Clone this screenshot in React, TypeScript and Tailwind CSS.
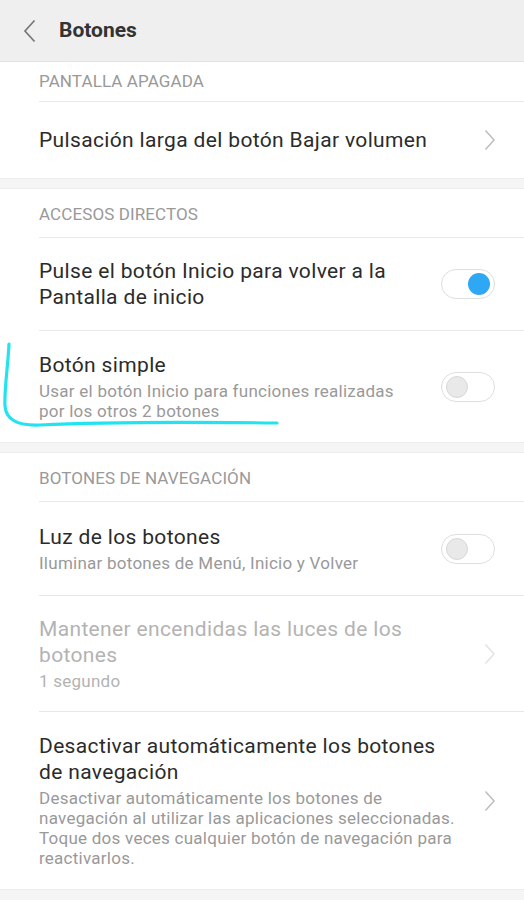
function Toggle({ on }: { on?: boolean }) {
  return (
    <div className="w-[54px] h-[30px] rounded-full border border-[#dedede] bg-white flex items-center px-[4px] shrink-0">
      {on ? (
        <div className="ml-auto w-[22px] h-[22px] rounded-full bg-[#2ea8f4]" />
      ) : (
        <div className="w-[22px] h-[22px] rounded-full bg-[#e9e9e9] border border-[#d8d8d8]" />
      )}
    </div>
  );
}

function SectionHeader({ label }: { label: string }) {
  return (
    <div className="h-[49px] pt-[4px] flex items-center text-[17px] tracking-[0.1px] text-[#999999] border-b border-[#e8e8e8]">
      {label}
    </div>
  );
}

interface RowProps {
  title: string[];
  sub?: string[];
  right?: React.ReactNode;
  disabled?: boolean;
  last?: boolean;
  py?: string;
}

function Row({ title, sub, right, disabled, last, py = "py-[20px]" }: RowProps) {
  return (
    <div className={`flex items-center ${py} pr-[29px] ${last ? "" : "border-b border-[#e8e8e8]"}`}>
      <div className="flex-1 min-w-0">
        {title.map((t) => (
          <div
            key={t}
            className={`text-[21px] tracking-[0.35px] leading-[26px] whitespace-nowrap ${disabled ? "text-[#b3b3b3]" : "text-[#2b2b2b]"}`}
          >
            {t}
          </div>
        ))}
        {sub && (
          <div className="mt-[3px]">
            {sub.map((s) => (
              <div
                key={s}
                className={`text-[17px] tracking-[0.25px] leading-[20px] whitespace-nowrap ${disabled ? "text-[#b3b3b3]" : "text-[#999999]"}`}
              >
                {s}
              </div>
            ))}
          </div>
        )}
      </div>
      {right}
    </div>
  );
}

function Chevron({ faded }: { faded?: boolean }) {
  return (
    <svg width="12" height="22" viewBox="0 0 12 22" className="shrink-0 -mr-[1px]">
      <polyline
        points="1.5,1.5 10,11 1.5,20.5"
        fill="none"
        stroke={faded ? "#e2e2e2" : "#bdbdbd"}
        strokeWidth="1.5"
      />
    </svg>
  );
}

export default function App() {
  return (
    <div
      className="relative w-[524px] h-[900px] bg-[#f5f5f5] overflow-hidden"
      style={{ fontFamily: "Roboto, 'Liberation Sans', sans-serif" }}
    >
      {/* Header */}
      <div className="h-[62px] bg-[#efefef] border-b border-[#e2e2e2] flex items-center">
        <svg width="13" height="24" viewBox="0 0 13 24" className="ml-[23px]">
          <polyline points="11.5,1.5 2,12 11.5,22.5" fill="none" stroke="#777777" strokeWidth="1.7" />
        </svg>
        <span className="ml-[23px] text-[21px] font-bold text-[#333333]">Botones</span>
      </div>

      {/* Pantalla apagada */}
      <div className="bg-white pl-[39px] border-b border-[#ececec]">
        <div className="h-[40px] flex items-center text-[17px] tracking-[0.1px] text-[#999999] border-b border-[#e8e8e8]">
          PANTALLA APAGADA
        </div>
        <Row title={["Pulsación larga del botón Bajar volumen"]} right={<Chevron />} py="py-[25px]" last />
      </div>

      {/* Accesos directos */}
      <div className="mt-[9px] bg-white pl-[39px] border-y border-[#ececec]">
        <SectionHeader label="ACCESOS DIRECTOS" />
        <Row title={["Pulse el botón Inicio para volver a la", "Pantalla de inicio"]} right={<Toggle on />} py="py-[20px]" />
        <Row
          title={["Botón simple"]}
          sub={["Usar el botón Inicio para funciones realizadas", "por los otros 2 botones"]}
          right={<Toggle />}
          py="py-[21px]"
          last
        />
      </div>

      {/* Botones de navegación */}
      <div className="mt-[9px] bg-white pl-[39px] border-y border-[#ececec]">
        <SectionHeader label="BOTONES DE NAVEGACIÓN" />
        <Row title={["Luz de los botones"]} sub={["Iluminar botones de Menú, Inicio y Volver"]} right={<Toggle />} py="py-[22px]" />
        <Row
          title={["Mantener encendidas las luces de los", "botones"]}
          sub={["1 segundo"]}
          right={<Chevron faded />}
          disabled
          py="py-[20px]"
        />
        <Row
          title={["Desactivar automáticamente los botones", "de navegación"]}
          sub={[
            "Desactivar automáticamente los botones de",
            "navegación al utilizar las aplicaciones seleccionadas.",
            "Toque dos veces cualquier botón de navegación para",
            "reactivarlos.",
          ]}
          right={<Chevron />}
          py="py-[21px]"
          last
        />
      </div>

      {/* hand-drawn highlight */}
      <svg className="absolute left-0 top-[336px] pointer-events-none" width="300" height="100" viewBox="0 0 300 100">
        <path
          d="M9 8 C 8 30, 4 55, 5 70 C 6 84, 18 90, 40 89 C 100 86, 200 86, 277 87"
          fill="none"
          stroke="#22e3f0"
          strokeWidth="3.2"
          strokeLinecap="round"
        />
      </svg>
    </div>
  );
}
